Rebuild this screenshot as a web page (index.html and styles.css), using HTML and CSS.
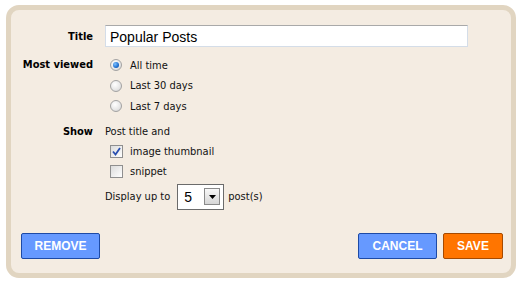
FILE: index.html
```html
<!DOCTYPE html>
<html lang="en">
<head>
    <meta charset="UTF-8">
    <title>Popular Posts</title>
    <link rel="stylesheet" href="styles.css">
</head>
<body>

    <div class="widget-panel">
        <div class="field title-row">
            <div class="label">Title</div>
            <div class="content">
                <input class="title-input" type="text" value="Popular Posts">
            </div>
        </div>

        <div class="field viewed-row">
            <div class="label">Most viewed</div>
            <div class="content">
                <div class="option"><span class="radio checked"></span>All time</div>
                <div class="option"><span class="radio"></span>Last 30 days</div>
                <div class="option"><span class="radio"></span>Last 7 days</div>
            </div>
        </div>

        <div class="field show-row">
            <div class="label">Show</div>
            <div class="content">
                <div class="line">Post title and</div>
                <div class="option check-option">
                    <span class="checkbox">
                        <svg width="9" height="9" viewBox="0 0 9 9"><path d="M1 4.5 L3.5 7.5 L8 1" fill="none" stroke="#2a4fb0" stroke-width="1.8"/></svg>
                    </span>image thumbnail
                </div>
                <div class="option check-option"><span class="checkbox"></span>snippet</div>
                <div class="display-line">
                    Display up to
                    <div class="select-box">
                        <span class="select-value">5</span>
                        <span class="select-arrow">
                            <svg width="7" height="4" viewBox="0 0 7 4"><path d="M0 0 H7 L3.5 4 Z" fill="#000"/></svg>
                        </span>
                    </div>
                    post(s)
                </div>
            </div>
        </div>

        <div class="actions">
            <button class="btn blue">REMOVE</button>
            <div class="spacer"></div>
            <button class="btn blue">CANCEL</button>
            <button class="btn orange">SAVE</button>
        </div>
    </div>

</body>
</html>
```

FILE: styles.css
```css
body {
    margin: 0;
    padding: 5px 0 0 6px;
    background-color: #ffffff;
    font-family: "DejaVu Sans Condensed", "DejaVu Sans", sans-serif;
    font-size: 11px;
    color: #111;
}
.widget-panel {
    box-sizing: border-box;
    width: 510px;
    height: 273px;
    background-color: #f4ece2;
    border: 5px solid #e1d5c1;
    border-radius: 13px;
    padding: 15px 0 0 0;
    display: flex;
    flex-direction: column;
}
.field {
    display: flex;
}
.label {
    width: 82px;
    margin-right: 12px;
    text-align: right;
    font-weight: bold;
    color: #000;
    line-height: 20px;
}
.content {
    display: flex;
    flex-direction: column;
}
.title-row .label {
    line-height: 23px;
}
.title-input {
    box-sizing: border-box;
    width: 363px;
    height: 22px;
    margin: 0;
    padding: 2px 4px 0 4px;
    border: 1px solid #d4dde8;
    border-top-color: #a9a9a9;
    background: #fff;
    font-family: "Liberation Sans", Arial, sans-serif;
    font-size: 14px;
    color: #000;
    outline: none;
}
.viewed-row {
    margin-top: 7px;
}
.option {
    display: flex;
    align-items: center;
    height: 20.5px;
    padding-left: 5px;
}
.radio {
    box-sizing: border-box;
    width: 12px;
    height: 12px;
    margin-right: 8px;
    border-radius: 50%;
    border: 1px solid #a3a3a3;
    background: radial-gradient(circle at 40% 35%, #ffffff 0%, #e6e6e6 60%, #c8c8c8 100%);
    display: flex;
    align-items: center;
    justify-content: center;
}
.radio.checked::after {
    content: "";
    width: 6px;
    height: 6px;
    border-radius: 50%;
    background: radial-gradient(circle at 35% 35%, #7fc2ff 0%, #1f6fd0 60%, #0b3f86 100%);
}
.show-row {
    margin-top: 5px;
}
.line {
    line-height: 20px;
}
.check-option {
    height: 20px;
}
.checkbox {
    box-sizing: border-box;
    width: 13px;
    height: 13px;
    margin-right: 7px;
    border: 1px solid #8f8f8f;
    background: linear-gradient(135deg, #dcdcdc 0%, #f4f4f4 70%, #ffffff 100%);
    display: flex;
    align-items: center;
    justify-content: center;
}
.display-line {
    display: flex;
    align-items: center;
    margin-top: 2px;
}
.select-box {
    box-sizing: border-box;
    width: 47px;
    height: 26px;
    margin: 0 4px 0 7px;
    border: 1px solid #6b6b6b;
    background: #fff;
    display: flex;
    align-items: center;
    padding: 0 3px 0 6px;
}
.select-value {
    flex: 1;
    font-family: "Liberation Sans", Arial, sans-serif;
    font-size: 14px;
    color: #000;
}
.select-arrow {
    box-sizing: border-box;
    width: 16px;
    height: 17px;
    border: 1px solid #8a8a8a;
    background: linear-gradient(#f8f8f8, #d6d6d6);
    display: flex;
    align-items: center;
    justify-content: center;
}
.actions {
    display: flex;
    margin-top: auto;
    margin-bottom: 14px;
    padding: 0 8px 0 10px;
}
.spacer {
    flex: 1;
}
.btn {
    height: 26px;
    margin: 0;
    padding: 0 11px;
    border: 1px solid #1d4aa6;
    border-radius: 2px;
    font-family: "Liberation Sans", Arial, sans-serif;
    font-size: 12px;
    font-weight: bold;
    color: #ffffff;
    cursor: pointer;
}
.btn.blue {
    background-color: #6699ff;
    min-width: 79px;
}
.btn.orange {
    background-color: #ff7500;
    border-color: #a64a00;
    margin-left: 6px;
    min-width: 60px;
}
```
